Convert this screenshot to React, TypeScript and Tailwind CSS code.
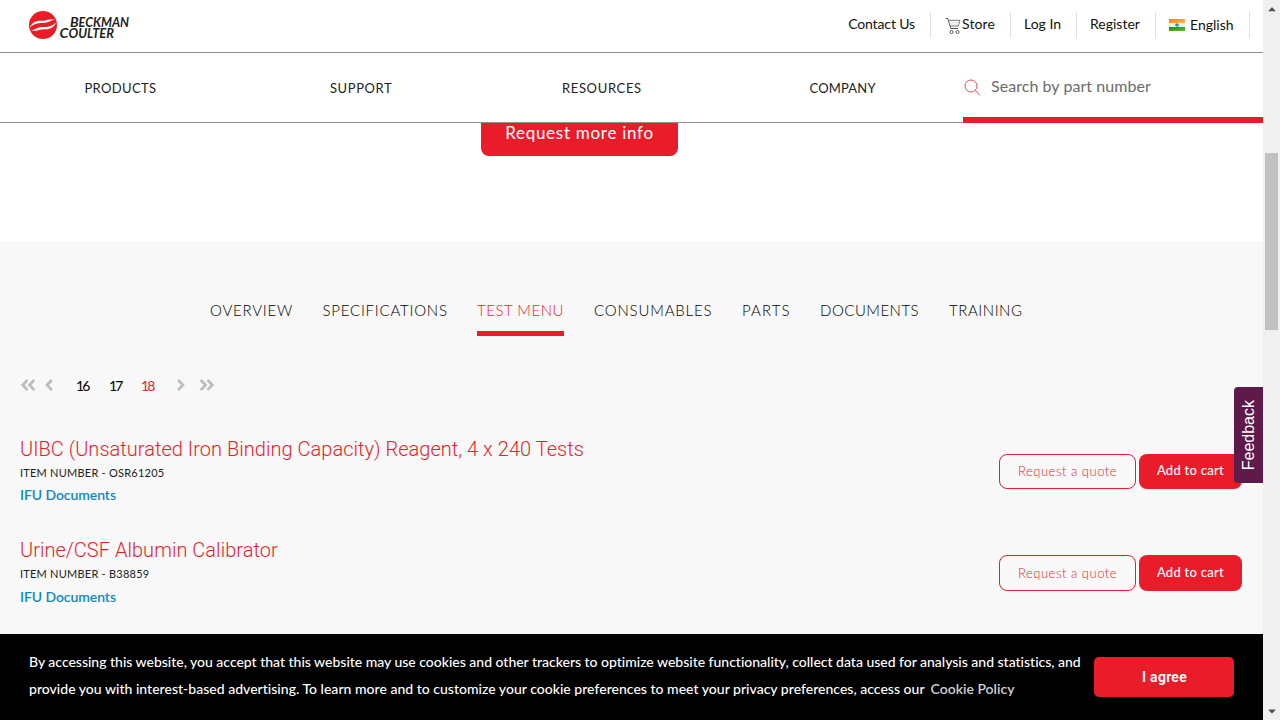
import { FaAngleDoubleLeft, FaAngleDoubleRight, FaAngleLeft, FaAngleRight, FaCaretDown, FaCaretUp } from "react-icons/fa";

const NAV = [
  { label: "PRODUCTS", cls: "tracking-[0.36px]" },
  { label: "SUPPORT", cls: "tracking-[0.6px]" },
  { label: "RESOURCES", cls: "tracking-[0.66px]" },
  { label: "COMPANY", cls: "tracking-[0.16px]" },
];

const TABS = [
  { label: "OVERVIEW", cls: "w-[82.5px] tracking-[0.78px]" },
  { label: "SPECIFICATIONS", cls: "w-[124.5px] tracking-[0.78px]" },
  { label: "TEST MENU", cls: "w-[87px] tracking-[0.52px]", active: true },
  { label: "CONSUMABLES", cls: "w-[118px] tracking-[0.82px]" },
  { label: "PARTS", cls: "w-[48px] tracking-[1.1px]" },
  { label: "DOCUMENTS", cls: "w-[99px] tracking-[0.49px]" },
  { label: "TRAINING", cls: "w-[73px] tracking-[0.56px]" },
];

const ITEMS = [
  {
    title: "UIBC (Unsaturated Iron Binding Capacity) Reagent, 4 x 240 Tests",
    number: "OSR61205",
    rowCls: "h-[101px]",
    linkCls: "mt-[2px]",
    btnCls: "h-[35px]",
  },
  {
    title: "Urine/CSF Albumin Calibrator",
    number: "B38859",
    rowCls: "h-[96px]",
    linkCls: "mt-[3px]",
    btnCls: "h-[36px]",
  },
];

function Logo() {
  return (
    <svg width="102" height="32" viewBox="0 0 102 32" className="block">
      <circle cx="15" cy="16" r="14" fill="#ed1c24" />
      <path d="M2 18.500C4 13.500 8 11.500 13 11.800C18 12 21 9.500 27 10.300C22.500 11.500 20.500 14 15 14C9.500 13.900 6 14.600 2 18.500Z" fill="#fff" />
      <path d="M28 13.500C26 18.500 22 20.500 17 20.200C12 20 9 22.500 3 21.700C7.500 20.500 9.500 18 15 18C20.500 18.100 24 17.400 28 13.500Z" fill="#fff" />
      <g fontFamily="Lato, 'Liberation Sans', sans-serif" fontStyle="italic" fontWeight="700" fill="#231f20">
        <text x="42" y="17.700" fontSize="13.800" textLength="59" lengthAdjust="spacingAndGlyphs">
          B<tspan fontSize="12.300">ECKMAN</tspan>
        </text>
        <text x="31.500" y="29.200" fontSize="13.800" textLength="54.500" lengthAdjust="spacingAndGlyphs">
          C<tspan fontSize="12.300">OULTER</tspan>
        </text>
      </g>
    </svg>
  );
}

function CartIcon() {
  return (
    <svg width="16" height="18" viewBox="0 0 16 18" fill="none" stroke="#555" className="block">
      <path d="M0.500 1.500H2.800L5.800 11.500H13" strokeWidth="1" />
      <path d="M3.500 3.300H15L13.300 9H5.300" stroke="#777" strokeWidth="1" />
      <path d="M4.200 5.200H14.300M4.800 7.100H13.800" stroke="#d4d4d4" strokeWidth="0.800" />
      <circle cx="6.500" cy="15" r="1.500" />
      <circle cx="12.500" cy="15" r="1.500" />
    </svg>
  );
}

function FlagIcon() {
  return (
    <svg width="16" height="12" viewBox="0 0 16 12" className="block">
      <defs>
        <linearGradient id="saffron" x1="0" y1="0" x2="1" y2="1">
          <stop offset="0" stopColor="#ff7a00" />
          <stop offset="1" stopColor="#ffbd6b" />
        </linearGradient>
        <linearGradient id="green" x1="0" y1="0" x2="1" y2="1">
          <stop offset="0" stopColor="#1c8a00" />
          <stop offset="1" stopColor="#5cbf3c" />
        </linearGradient>
      </defs>
      <rect width="16" height="4" fill="url(#saffron)" />
      <rect y="4" width="16" height="4" fill="#e9f2f2" />
      <rect y="8" width="16" height="4" fill="url(#green)" />
      <circle cx="8" cy="6" r="1.800" fill="#1b8fe0" />
    </svg>
  );
}

function Header() {
  return (
    <header className="shrink-0 bg-white">
      <div className="flex h-[53px] justify-between border-b border-[#8f8f8f] pr-[13px] pl-[28px]">
        <div className="pt-[9px]">
          <Logo />
        </div>
        <div className="flex h-[38px] pt-3 text-sm leading-[23px] text-[#111]">
          <a className="mr-[15px] tracking-[-0.13px]">Contact Us</a>
          <a className="flex w-[80px] border-l border-[#e0e0e0] pl-[14px]">
            <span className="mr-px pt-[5px]">
              <CartIcon />
            </span>
            <span className="tracking-[0.1px]">Store</span>
          </a>
          <a className="w-[66px] border-l border-[#e0e0e0] pl-[13px]">Log In</a>
          <a className="w-[79px] border-l border-[#e0e0e0] pl-[13px]">Register</a>
          <a className="flex w-[95px] border-x border-[#e0e0e0] pl-[13px]">
            <span className="mr-[5px] pt-[7px]">
              <FlagIcon />
            </span>
            <span className="pt-px">English</span>
          </a>
        </div>
      </div>
      <div className="flex h-[70px] border-b border-[#8f8f8f]">
        <nav className="grid w-[963px] grid-cols-4 text-center text-[13px] leading-[70px] text-[#222]">
          {NAV.map((n) => (
            <a key={n.label} className={n.cls}>
              {n.label}
            </a>
          ))}
        </nav>
        <div className="-mb-px flex flex-1 border-b-[6px] border-[#eb1c2a]">
          <svg width="18" height="18" viewBox="0 0 18 18" fill="none" stroke="#ea4f58" strokeWidth="1" className="mt-[26px] ml-px">
            <circle cx="7" cy="7" r="6" />
            <path d="M11.200 11.200L16 16.500" />
          </svg>
          <span className="ml-[9px] text-base leading-[66px] tracking-[0.05px] text-[#6b6b6b]">Search by part number</span>
        </div>
      </div>
    </header>
  );
}

function TestMenu() {
  return (
    <section className="flex-1 bg-[#f8f8f8] pt-[58px]">
      <div className="flex gap-[30px] pl-[210px] text-[15px] font-light whitespace-nowrap">
        {TABS.map((t) => (
          <a
            key={t.label}
            className={`${t.cls} h-[37px] leading-[22px] ${t.active ? "border-b-[5px] border-[#eb1c2a] text-[#eb1c2a]" : "text-black"}`}
          >
            {t.label}
          </a>
        ))}
      </div>
      <div className="mt-[37px] flex h-6 items-center pl-[19px] text-sm text-black">
        <FaAngleDoubleLeft className="size-[18px] text-[#bdbdbd]" />
        <FaAngleLeft className="ml-[3px] size-[18px] text-[#bdbdbd]" />
        <span className="ml-[18px] w-[33px] pt-[2px] tracking-[-1.9px]">16</span>
        <span className="w-[32px] pt-[2px] tracking-[-1.9px]">17</span>
        <span className="w-[31px] pt-[2px] tracking-[-1.9px] text-[#eb1c2a]">18</span>
        <FaAngleRight className="size-[18px] text-[#bdbdbd]" />
        <FaAngleDoubleRight className="ml-[8px] size-[18px] text-[#bdbdbd]" />
      </div>
      <div className="mt-[37px] pr-[21px] pl-[20px]">
        {ITEMS.map((it) => (
          <div key={it.number} className={`flex justify-between ${it.rowCls}`}>
            <div>
              <h3 className="font-['Roboto','Liberation_Sans',sans-serif] text-[20px] leading-[30px] font-light tracking-[0.03px] text-[#eb1c2a]">
                {it.title}
              </h3>
              <p className="text-[11px] leading-[18px] tracking-[0.23px] text-[#222]">ITEM NUMBER - {it.number}</p>
              <a className={`block text-sm leading-[22px] font-semibold tracking-[-0.08px] text-[#0e88c8] ${it.linkCls}`}>IFU Documents</a>
            </div>
            <div className="flex gap-[3px] pt-[20px] text-[13px]">
              <button className={`w-[137px] rounded-lg border border-[#eb1c2a] pt-px font-light tracking-[0.52px] text-[#eb1c2a] ${it.btnCls}`}>
                Request a quote
              </button>
              <button className={`w-[103px] rounded-lg bg-[#eb1c2a] pb-px font-medium tracking-[0.28px] text-white ${it.btnCls}`}>Add to cart</button>
            </div>
          </div>
        ))}
      </div>
    </section>
  );
}

function CookieBar() {
  return (
    <footer className="flex h-[86px] shrink-0 items-start bg-black pl-[29px] text-white">
      <div className="w-[1065px] pt-[14px] text-sm leading-[27px] font-medium whitespace-nowrap">
        <p className="tracking-[-0.013px]">
          By accessing this website, you accept that this website may use cookies and other trackers to optimize website functionality, collect data used for
          analysis and statistics, and
        </p>
        <p className="tracking-[0.018px]">
          provide you with interest-based advertising. To learn more and to customize your cookie preferences to meet your privacy preferences, access our
          <a className="ml-[6px] font-semibold tracking-[0px] text-[#cfcfcf]">Cookie Policy</a>
        </p>
      </div>
      <button className="mt-[23px] h-10 w-[140px] rounded-[5px] bg-[#eb1c2a] pl-px font-['Roboto',sans-serif] text-sm font-semibold tracking-[0.3px]">
        I agree
      </button>
    </footer>
  );
}

export default function App() {
  return (
    <div className="relative flex h-[720px] w-[1280px] overflow-hidden font-['Lato','Liberation_Sans',sans-serif]">
      <div className="flex w-[1263px] flex-col bg-white">
        <Header />
        <div className="h-[118px] shrink-0 pl-[481px]">
          <button className="block h-[33px] w-[197px] rounded-b-lg bg-[#eb1c2a] pb-[13px] text-[17px] leading-[20px] tracking-[0.72px] text-white">
            Request more info
          </button>
        </div>
        <TestMenu />
        <CookieBar />
      </div>
      <div className="flex w-[17px] flex-col items-center bg-[#f0f0f0] text-[#505050]">
        <FaCaretUp className="mt-[3px] h-3 w-3" />
        <div className="mt-[138px] h-[177px] w-[13px] bg-[#c1c1c1]" />
        <FaCaretDown className="mt-auto mb-[3px] h-3 w-3" />
      </div>
      <div className="absolute top-[387px] left-[1234px] flex h-24 w-[29px] items-center justify-center rounded-l bg-[#5e1a4b] pl-px">
        <span className="rotate-180 font-['Liberation_Sans',sans-serif] text-base leading-none text-white [writing-mode:vertical-rl]">
          Feedback
        </span>
      </div>
    </div>
  );
}
